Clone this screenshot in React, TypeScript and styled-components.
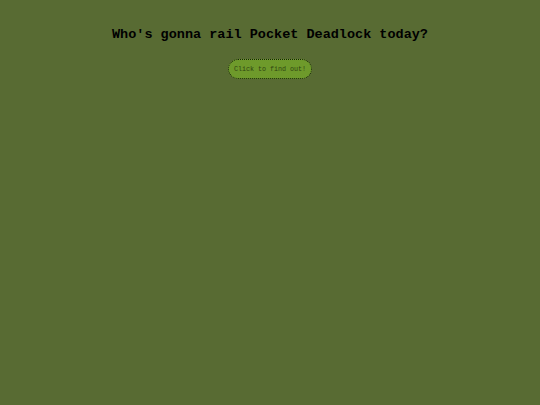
import React from "react";
import styled, { createGlobalStyle } from "styled-components";

const GlobalStyle = createGlobalStyle`
  html, body {
    margin: 0;
    padding: 0;
    background: #586b33;
  }
  body {
    font-family: "Liberation Mono", "Courier New", monospace;
  }
`;

const Page = styled.div`
  min-height: 405px;
  display: flex;
  flex-direction: column;
  align-items: center;
  padding-top: 26px;
  box-sizing: border-box;
`;

const Title = styled.h1`
  margin: 0;
  font-size: 13.5px;
  line-height: 18px;
  font-weight: bold;
  color: #000000;
`;

const FindButton = styled.button`
  margin-top: 15px;
  height: 20px;
  padding: 0 5px;
  border: 1px dotted #16220a;
  border-radius: 10px;
  background: #6e9a2b;
  color: #2e4410;
  font-family: "Liberation Mono", "Courier New", monospace;
  font-size: 6.7px;
  cursor: pointer;
`;

export default function App() {
  return (
    <>
      <GlobalStyle />
      <Page>
        <Title>Who's gonna rail Pocket Deadlock today?</Title>
        <FindButton>Click to find out!</FindButton>
      </Page>
    </>
  );
}
